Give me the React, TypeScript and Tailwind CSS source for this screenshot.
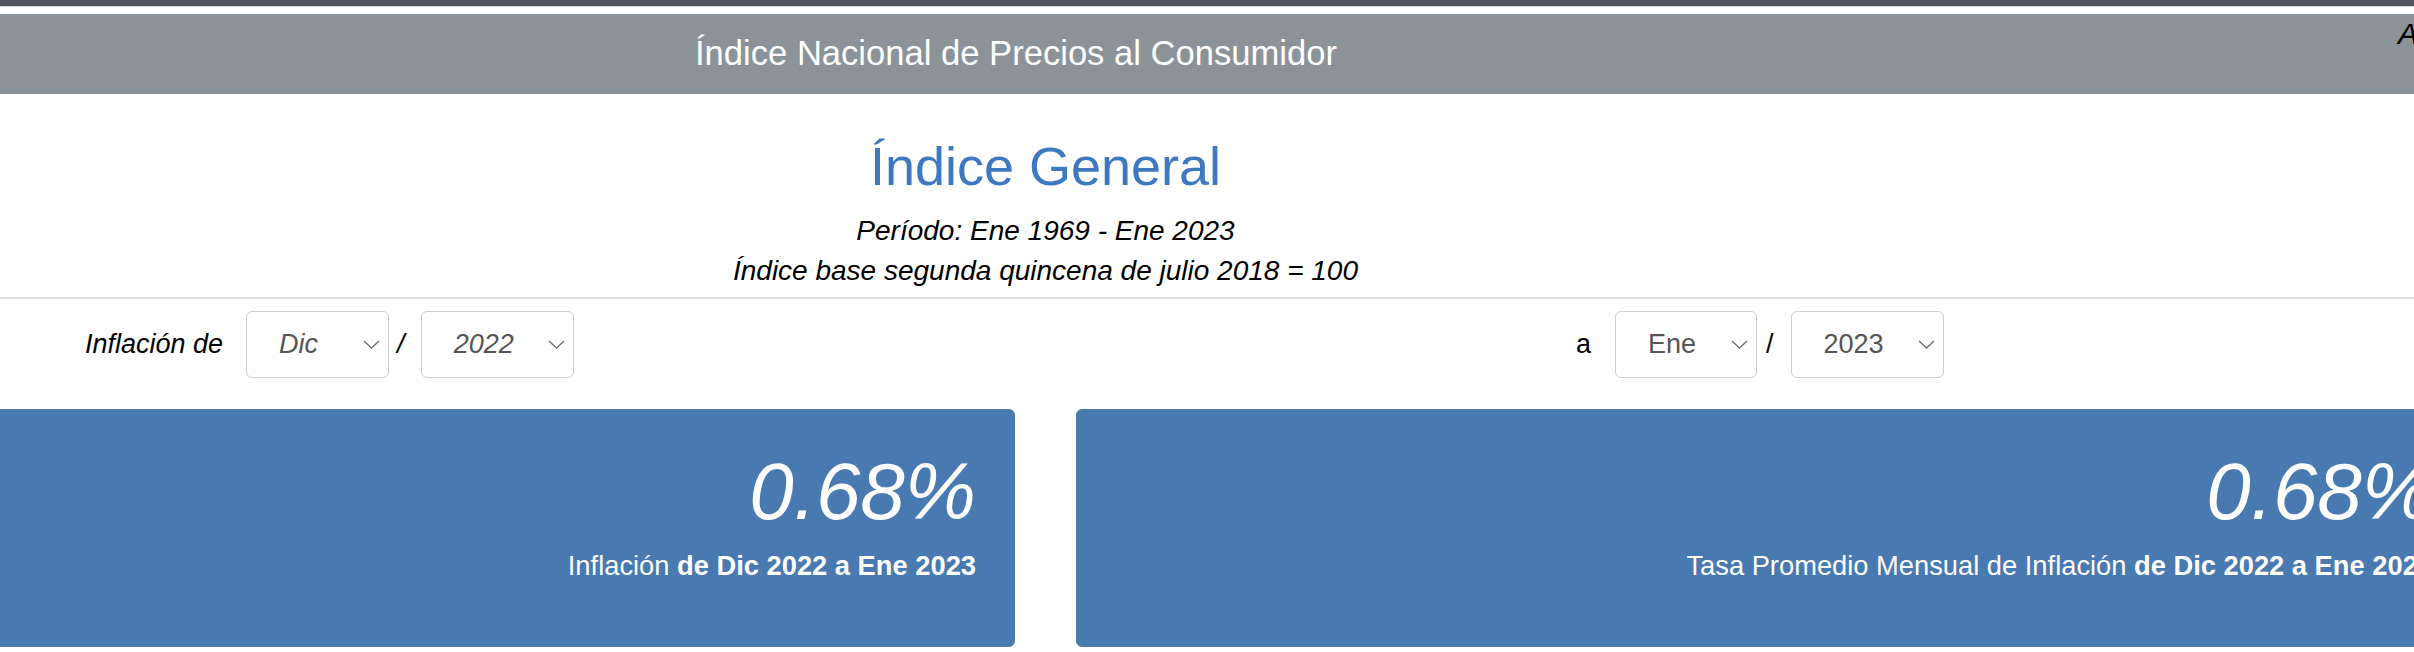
import React from "react";

const sans = "font-['Liberation_Sans',Arial,sans-serif]";

function Chevron() {
  return (
    <svg width="17" height="9" viewBox="0 0 17 9" fill="none" className="shrink-0">
      <path d="M1 1 L8.5 8 L16 1" stroke="#6f6f6f" strokeWidth="1.3" />
    </svg>
  );
}

function FakeSelect({
  value,
  width,
  italic,
}: {
  value: string;
  width: string;
  italic?: boolean;
}) {
  return (
    <div
      className={`${width} flex h-[67px] items-center justify-between rounded-[6px] border border-[#cfcfcf] pl-[32px] pr-[8px] text-[27px] text-[#555] ${
        italic ? "italic" : ""
      }`}
    >
      <span>{value}</span>
      <Chevron />
    </div>
  );
}

function StatBox({ caption, value }: { caption: string; value: string }) {
  return (
    <div className="h-[238px] rounded-[6px] border border-[#4b7ea4] bg-[#4879b1] pr-[38px] pt-[42px] text-right text-white">
      <div className="text-[80px] italic leading-none">{value}</div>
      <div className="mt-[18px] text-[27.3px] leading-[32px]">
        {caption} <span className="font-bold">de Dic 2022 a Ene 2023</span>
      </div>
    </div>
  );
}

export default function App() {
  return (
    <div className={`${sans} h-[652px] w-[2414px] overflow-hidden bg-white`}>
      <div className="h-[6px] bg-[#4e555d]" />
      <div className="h-px bg-[#d6d9dc]" />
      <div className="h-[7px] bg-white" />

      <header className="flex h-[80px] items-center bg-[#8b9399]">
        <div className="ml-[695px] text-[34.6px] text-white">
          Índice Nacional de Precios al Consumidor
        </div>
        <div className="ml-auto mr-[-4px] self-start pt-[6px] text-[30px] italic leading-[28px] text-black">
          A
        </div>
      </header>

      <div className="-ml-[381px] w-[2853px]">
        <div className="mt-[40px] text-center">
          <h1 className="text-[54px] leading-[1.2] text-[#3d78c0]">Índice General</h1>
          <div className="mt-[12px] text-[28px] italic leading-[40px] text-black">
            <p>Período: Ene 1969 - Ene 2023</p>
            <p>Índice base segunda quincena de julio 2018 = 100</p>
          </div>
        </div>
      </div>

      <div className="mt-[6px] h-[2px] bg-[#dedede]" />

      <div className="-ml-[381px] w-[2853px]">
        <div className="mt-[12px] grid grid-cols-2 gap-[61px] text-[27px] text-black">
          <div className="flex items-center pl-[466px]">
            <span className="italic">Inflación de</span>
            <div className="ml-[23px]">
              <FakeSelect value="Dic" width="w-[143px]" italic />
            </div>
            <span className="ml-[8px] mr-[16px] italic">/</span>
            <FakeSelect value="2022" width="w-[153px]" italic />
          </div>
          <div className="flex items-center pl-[500px]">
            <span>a</span>
            <div className="ml-[24px]">
              <FakeSelect value="Ene" width="w-[142px]" />
            </div>
            <span className="ml-[9px] mr-[17px]">/</span>
            <FakeSelect value="2023" width="w-[153px]" />
          </div>
        </div>

        <div className="mt-[31px] grid grid-cols-2 gap-[61px]">
          <StatBox value="0.68%" caption="Inflación" />
          <StatBox value="0.68%" caption="Tasa Promedio Mensual de Inflación" />
        </div>
      </div>
    </div>
  );
}
